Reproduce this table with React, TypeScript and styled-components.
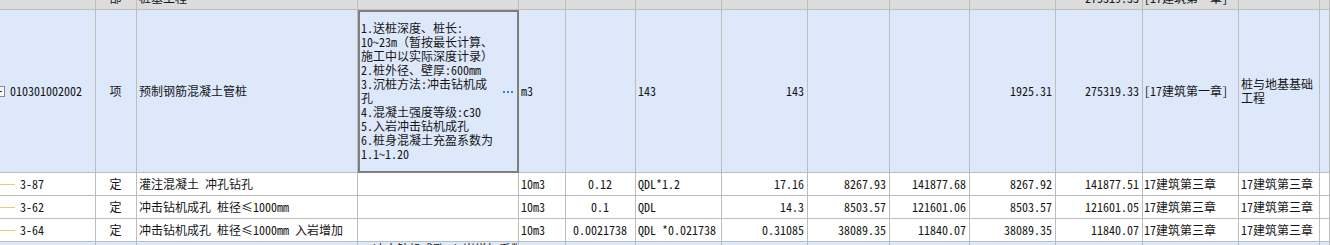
import React from "react";
import styled, { createGlobalStyle } from "styled-components";

const GlobalStyle = createGlobalStyle`
  html, body {
    margin: 0;
    padding: 0;
    background: #dde8fb;
  }
  body {
    overflow: hidden;
    font-family: "Noto Sans CJK SC", "Noto Sans", sans-serif;
  }
`;

type Tone = "head" | "blue" | "white";
type Align = "left" | "center" | "right";
type VAlign = "top" | "center" | "bottom";

const toneBg: Record<Tone, string> = {
  head: "#dcdcdc",
  blue: "#dde8fb",
  white: "#ffffff",
};

const justify: Record<Align, string> = {
  left: "flex-start",
  center: "center",
  right: "flex-end",
};

const valign: Record<VAlign, string> = {
  top: "flex-start",
  center: "center",
  bottom: "flex-end",
};

const COLS = [96, 41, 221, 161, 47, 70, 86, 86, 82, 80, 86, 87, 96, 81];

const Grid = styled.div`
  display: grid;
  grid-template-columns: ${COLS.map((w) => w + "px").join(" ")} 1fr;
  grid-template-rows: 10px 163px 23px 23px 23px 23px;
  width: 1330px;
  height: 245px;
  overflow: hidden;
  font-size: 12px;
  color: #161616;
  font-feature-settings: "hwid" 1;
`;

const Cell = styled.div<{ $tone: Tone; $align?: Align; $v?: VAlign; $wrap?: boolean }>`
  box-sizing: border-box;
  min-width: 0;
  background: ${(p) => toneBg[p.$tone]};
  border-right: 1px solid #bdbdbd;
  border-bottom: 1px solid #bdbdbd;
  display: flex;
  align-items: ${(p) => valign[p.$v ?? "center"]};
  justify-content: ${(p) => justify[p.$align ?? "left"]};
  padding: 0 3px 0 2px;
  overflow: hidden;
  white-space: ${(p) => (p.$wrap ? "normal" : "nowrap")};
  line-height: ${(p) => (p.$tone === "head" ? "22px" : "14px")};
`;

const TreeCell = styled(Cell)`
  padding: 0;
  gap: 5px;
`;

const Collapse = styled.span`
  box-sizing: border-box;
  flex: none;
  width: 11px;
  height: 11px;
  margin-left: -6px;
  border: 1px solid #8a8a8a;
  background: #f4f7fc;
  display: flex;
  align-items: center;
  justify-content: center;
  &::after {
    content: "";
    width: 5px;
    height: 1px;
    background: #333;
  }
`;

const Branch = styled.span`
  flex: none;
  width: 15px;
  height: 1px;
  background: #f7c577;
`;

const ActiveCell = styled(Cell)`
  outline: 2px solid #7f7f7f;
  outline-offset: -2px;
  padding: 0 5px 0 3px;
  gap: 2px;
  z-index: 1;
`;

const Memo = styled.div`
  flex: 1;
  display: flex;
  flex-direction: column;
  line-height: 14px;
`;

const Full = styled.span`
  font-feature-settings: normal;
`;

const Dots = styled.span`
  flex: none;
  display: flex;
  gap: 2px;
  margin-top: 1px;
`;

const Dot = styled.span`
  width: 2px;
  height: 2px;
  background: #3d7cc9;
`;

const Wrapped = styled.span`
  word-break: break-all;
  line-height: 14px;
`;

const memoLines: React.ReactNode[] = [
  "1.送桩深度、桩长:",
  <>
    10~23m<Full>（</Full>暂按最长计算、
  </>,
  <>
    施工中以实际深度计录<Full>）</Full>
  </>,
  "2.桩外径、壁厚:600mm",
  "3.沉桩方法:冲击钻机成",
  "孔",
  "4.混凝土强度等级:c30",
  "5.入岩冲击钻机成孔",
  "6.桩身混凝土充盈系数为",
  "1.1~1.20",
];

type SubRow = {
  code: string;
  name: string;
  unit: string;
  qty: string;
  expr: string;
  amount: string;
  price: string;
  total: string;
  price2: string;
  total2: string;
  chapter: string;
  major: string;
};

const subRows: SubRow[] = [
  {
    code: "3-87",
    name: "灌注混凝土 冲孔钻孔",
    unit: "10m3",
    qty: "0.12",
    expr: "QDL*1.2",
    amount: "17.16",
    price: "8267.93",
    total: "141877.68",
    price2: "8267.92",
    total2: "141877.51",
    chapter: "17建筑第三章",
    major: "17建筑第三章",
  },
  {
    code: "3-62",
    name: "冲击钻机成孔 桩径≤1000mm",
    unit: "10m3",
    qty: "0.1",
    expr: "QDL",
    amount: "14.3",
    price: "8503.57",
    total: "121601.06",
    price2: "8503.57",
    total2: "121601.05",
    chapter: "17建筑第三章",
    major: "17建筑第三章",
  },
  {
    code: "3-64",
    name: "冲击钻机成孔 桩径≤1000mm 入岩增加",
    unit: "10m3",
    qty: "0.0021738",
    expr: "QDL *0.021738",
    amount: "0.31085",
    price: "38089.35",
    total: "11840.07",
    price2: "38089.35",
    total2: "11840.07",
    chapter: "17建筑第三章",
    major: "17建筑第三章",
  },
];

const HeadRow = () => (
  <>
    <Cell $tone="head" $v="bottom" />
    <Cell $tone="head" $v="bottom" $align="center">部</Cell>
    <Cell $tone="head" $v="bottom">桩基工程</Cell>
    {Array.from({ length: 8 }, (_, i) => (
      <Cell key={i} $tone="head" $v="bottom" />
    ))}
    <Cell $tone="head" $v="bottom" $align="right">275319.33</Cell>
    <Cell $tone="head" $v="bottom" style={{ paddingLeft: 1 }}>[17建筑第一章]</Cell>
    <Cell $tone="head" $v="bottom" />
    <Cell $tone="head" $v="bottom" />
  </>
);

const ItemRow = () => (
  <>
    <TreeCell $tone="blue">
      <Collapse />
      010301002002
    </TreeCell>
    <Cell $tone="blue" $align="center">项</Cell>
    <Cell $tone="blue">预制钢筋混凝土管桩</Cell>
    <ActiveCell $tone="blue">
      <Memo>
        {memoLines.map((l, i) => (
          <span key={i}>{l}</span>
        ))}
      </Memo>
      <Dots>
        <Dot />
        <Dot />
        <Dot />
      </Dots>
    </ActiveCell>
    <Cell $tone="blue">m3</Cell>
    <Cell $tone="blue" />
    <Cell $tone="blue">143</Cell>
    <Cell $tone="blue" $align="right">143</Cell>
    <Cell $tone="blue" />
    <Cell $tone="blue" />
    <Cell $tone="blue" $align="right">1925.31</Cell>
    <Cell $tone="blue" $align="right">275319.33</Cell>
    <Cell $tone="blue" style={{ paddingLeft: 1 }}>[17建筑第一章]</Cell>
    <Cell $tone="blue" $wrap>
      <Wrapped>桩与地基基础工程</Wrapped>
    </Cell>
    <Cell $tone="blue" />
  </>
);

const QuotaRow = ({ r }: { r: SubRow }) => (
  <>
    <TreeCell $tone="white">
      <Branch />
      {r.code}
    </TreeCell>
    <Cell $tone="white" $align="center">定</Cell>
    <Cell $tone="white">{r.name}</Cell>
    <Cell $tone="white" />
    <Cell $tone="white">{r.unit}</Cell>
    <Cell $tone="white" $align="center">{r.qty}</Cell>
    <Cell $tone="white">{r.expr}</Cell>
    <Cell $tone="white" $align="right">{r.amount}</Cell>
    <Cell $tone="white" $align="right">{r.price}</Cell>
    <Cell $tone="white" $align="right">{r.total}</Cell>
    <Cell $tone="white" $align="right">{r.price2}</Cell>
    <Cell $tone="white" $align="right">{r.total2}</Cell>
    <Cell $tone="white" style={{ paddingLeft: 1 }}>{r.chapter}</Cell>
    <Cell $tone="white">{r.major}</Cell>
    <Cell $tone="white" />
  </>
);

const TailRow = () => (
  <>
    {Array.from({ length: 3 }, (_, i) => (
      <Cell key={i} $tone="blue" $v="top" />
    ))}
    <Cell $tone="blue" $v="top" style={{ paddingLeft: 15 }}>
      冲击钻机成孔 入岩增加系数
    </Cell>
    {Array.from({ length: 11 }, (_, i) => (
      <Cell key={"t" + i} $tone="blue" $v="top" />
    ))}
  </>
);

export default function App() {
  return (
    <>
      <GlobalStyle />
      <Grid>
        <HeadRow />
        <ItemRow />
        {subRows.map((r) => (
          <QuotaRow key={r.code} r={r} />
        ))}
        <TailRow />
      </Grid>
    </>
  );
}
